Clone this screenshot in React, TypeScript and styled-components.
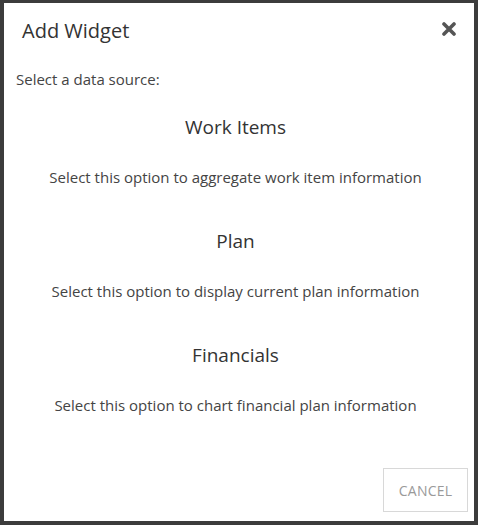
import styled, { createGlobalStyle } from 'styled-components'

const GlobalStyle = createGlobalStyle`
  html, body {
    margin: 0;
    padding: 0;
    background: #3c3c3c;
  }
  body {
    font-family: 'Open Sans', 'Noto Sans', sans-serif;
  }
`

const Backdrop = styled.div`
  width: 478px;
  height: 525px;
  box-sizing: border-box;
  padding: 3px 4px 4px 4px;
  background: #3c3c3c;
  overflow: hidden;
`

const Dialog = styled.div`
  width: 470px;
  height: 518px;
  background: #fff;
  display: flex;
  flex-direction: column;
  box-sizing: border-box;
`

const Header = styled.div`
  display: flex;
  align-items: center;
  justify-content: space-between;
  height: 54px;
  padding: 0 17px 0 18px;
`

const Title = styled.h4`
  margin: 0;
  font-size: 20px;
  font-weight: 400;
  color: #333;
`

const CloseButton = styled.button`
  border: none;
  background: transparent;
  padding: 0;
  margin-bottom: 3px;
  width: 16px;
  height: 16px;
  display: flex;
  align-items: center;
  justify-content: center;
  cursor: pointer;
`

const Body = styled.div`
  flex: 1;
  padding: 12px 19px 0 12px;
`

const Prompt = styled.div`
  font-size: 15px;
  color: #444;
  line-height: 20px;
`

const Option = styled.div`
  display: flex;
  flex-direction: column;
  align-items: center;
  cursor: pointer;
  padding-top: 25px;
`

const OptionTitle = styled.div`
  font-size: 19px;
  color: #333;
  line-height: 26px;
`

const OptionText = styled.div`
  font-size: 15px;
  color: #444;
  line-height: 20px;
  margin-top: 27px;
  margin-bottom: 16px;
`

const Footer = styled.div`
  display: flex;
  justify-content: flex-end;
  padding: 0 6px 9px 0;
`

const CancelButton = styled.button`
  width: 85px;
  height: 44px;
  border: 1px solid #d8d8d8;
  background: #fff;
  color: #9a9a9a;
  font-family: inherit;
  font-size: 14px;
  letter-spacing: 0.2px;
  cursor: pointer;
`

const options = [
  { title: 'Work Items', text: 'Select this option to aggregate work item information' },
  { title: 'Plan', text: 'Select this option to display current plan information' },
  { title: 'Financials', text: 'Select this option to chart financial plan information' },
]

export default function App() {
  return (
    <Backdrop>
      <GlobalStyle />
      <Dialog>
        <Header>
          <Title>Add Widget</Title>
          <CloseButton aria-label="Close">
            <svg width="14" height="14" viewBox="0 0 14 14">
              <path d="M2 2 L12 12 M12 2 L2 12" stroke="#555" strokeWidth="3.6" strokeLinecap="round" />
            </svg>
          </CloseButton>
        </Header>
        <Body>
          <Prompt>Select a data source:</Prompt>
          {options.map((o) => (
            <Option key={o.title}>
              <OptionTitle>{o.title}</OptionTitle>
              <OptionText>{o.text}</OptionText>
            </Option>
          ))}
        </Body>
        <Footer>
          <CancelButton>CANCEL</CancelButton>
        </Footer>
      </Dialog>
    </Backdrop>
  )
}
